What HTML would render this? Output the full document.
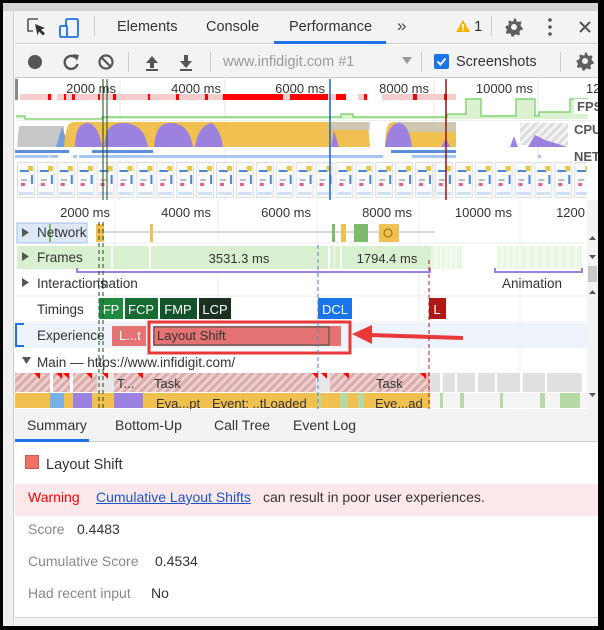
<!DOCTYPE html>
<html><head><meta charset="utf-8"><style>
*{margin:0;padding:0;box-sizing:border-box}
body{width:604px;height:630px;background:#000;position:relative;overflow:hidden;font-family:"Liberation Sans",sans-serif;font-size:14px;color:#333}
.a{position:absolute}
.t{position:absolute;white-space:nowrap}
</style></head><body>
<div class="a" style="left:3px;top:3px;width:595px;height:623px;background:#fff"></div>
<div class="a" style="left:3px;top:3px;width:595px;height:8px;background:#d4d4d4"></div>
<div class="a" style="left:3px;top:11px;width:11px;height:615px;background:#f0f0f0;border-right:1px solid #ccc"></div>
<!-- tab bar -->
<div class="a" style="left:15px;top:11px;width:583px;height:33px;background:#f3f3f3;border-bottom:1px solid #ccc"></div>
<svg class="a" style="left:24px;top:15px" width="70" height="26" viewBox="0 0 70 26">
<path d="M4 4h10M4 4v12h5" stroke="#555" stroke-width="1.6" fill="none"/>
<path d="M11 9l10 4-4 1.5 4 4-2 2-4-4-1.5 4z" fill="#333"/>
<rect x="42" y="4" width="12" height="18" rx="1.5" stroke="#1a73e8" stroke-width="1.8" fill="none"/>
<rect x="36" y="11" width="7" height="11" rx="1" stroke="#1a73e8" stroke-width="1.8" fill="#f3f3f3"/>
</svg>
<div class="a" style="left:94px;top:16px;width:1px;height:20px;background:#ccc"></div>
<div class="t" style="left:117px;top:19px;font-size:14.5px">Elements</div>
<div class="t" style="left:206px;top:19px;font-size:14.5px">Console</div>
<div class="t" style="left:289px;top:19px;font-size:14.5px">Performance</div>
<div class="a" style="left:274px;top:41px;width:112px;height:3px;background:#1a73e8"></div>
<div class="t" style="left:397px;top:16px;font-size:17px;color:#444">»</div>
<svg class="a" style="left:455px;top:19px" width="16" height="14"><path d="M8 1L15 13H1z" fill="#f4b400"/><rect x="7.2" y="5" width="1.6" height="4.5" fill="#fff"/><rect x="7.2" y="10.5" width="1.6" height="1.6" fill="#fff"/></svg>
<div class="t" style="left:474px;top:18px;font-size:15px">1</div>
<div class="a" style="left:491px;top:16px;width:1px;height:20px;background:#ccc"></div>
<svg class="a" style="left:504px;top:17px" width="20" height="20" viewBox="0 0 20 20"><path d="M10 1.5l2 .3.5 2.3 1.6.9 2.2-.8 1.3 1.6-1.1 2 .4 1.8 1.9 1.3-.3 2-2.3.5-.9 1.6.8 2.2-1.6 1.3-2-1.1-1.8.4-1.3 1.9-2-.3-.5-2.3-1.6-.9-2.2.8-1.3-1.6 1.1-2-.4-1.8L1.5 11l.3-2 2.3-.5.9-1.6-.8-2.2 1.6-1.3 2 1.1 1.8-.4z" fill="#5f5f5f"/><circle cx="10" cy="10" r="3" fill="#f3f3f3"/></svg>
<svg class="a" style="left:547px;top:17px" width="6" height="20"><circle cx="3" cy="3" r="1.8" fill="#555"/><circle cx="3" cy="10" r="1.8" fill="#555"/><circle cx="3" cy="17" r="1.8" fill="#555"/></svg>
<svg class="a" style="left:578px;top:20px" width="14" height="14"><path d="M2 2l10 10M12 2L2 12" stroke="#555" stroke-width="2"/></svg>
<!-- toolbar -->
<div class="a" style="left:15px;top:45px;width:583px;height:33px;background:#f3f3f3;border-bottom:1px solid #ccc"></div>
<svg class="a" style="left:25px;top:51px" width="175" height="22" viewBox="0 0 175 22">
<circle cx="10" cy="11" r="7" fill="#555"/>
<path d="M51 7a6.5 6.5 0 1 0 1.5 6" stroke="#555" stroke-width="2.4" fill="none"/><path d="M48 3l6 1-2 6z" fill="#555"/>
<circle cx="81" cy="11" r="6.5" stroke="#555" stroke-width="2.2" fill="none"/><path d="M76.5 6.5l9 9" stroke="#555" stroke-width="2.2"/>
<path d="M127 5l-6 7h4v5h4v-5h4z" fill="#555"/><rect x="121" y="18" width="12" height="2" fill="#555"/>
<path d="M161 17l-6-7h4V4h4v6h4z" fill="#555"/><rect x="155" y="18" width="12" height="2" fill="#555"/>
</svg>
<div class="a" style="left:128px;top:52px;width:1px;height:20px;background:#ccc"></div>
<div class="a" style="left:210px;top:52px;width:1px;height:20px;background:#ccc"></div>
<div class="t" style="left:223px;top:54px;color:#9a9a9a;font-size:14.5px">www.infidigit.com #1</div>
<svg class="a" style="left:402px;top:57px" width="10" height="8"><path d="M0 0h10L5 7z" fill="#999"/></svg>
<div class="a" style="left:421px;top:52px;width:1px;height:20px;background:#ccc"></div>
<div class="a" style="left:434px;top:54px;width:15px;height:15px;background:#1a73e8;border-radius:2px"></div>
<svg class="a" style="left:434px;top:54px" width="15" height="15"><path d="M3.5 7.5l3 3 5-6" stroke="#fff" stroke-width="2" fill="none"/></svg>
<div class="t" style="left:456px;top:54px;font-size:14.5px">Screenshots</div>
<div class="a" style="left:560px;top:52px;width:1px;height:20px;background:#ccc"></div>
<svg class="a" style="left:575px;top:51px" width="20" height="20" viewBox="0 0 20 20"><path d="M10 1.5l2 .3.5 2.3 1.6.9 2.2-.8 1.3 1.6-1.1 2 .4 1.8 1.9 1.3-.3 2-2.3.5-.9 1.6.8 2.2-1.6 1.3-2-1.1-1.8.4-1.3 1.9-2-.3-.5-2.3-1.6-.9-2.2.8-1.3-1.6 1.1-2-.4-1.8L1.5 11l.3-2 2.3-.5.9-1.6-.8-2.2 1.6-1.3 2 1.1 1.8-.4z" fill="#5f5f5f"/><circle cx="10" cy="10" r="3" fill="#f3f3f3"/></svg>
<!-- timeline svg -->
<svg class="a" style="left:0;top:79px" width="598" height="330" viewBox="0 79 598 330" font-family="Liberation Sans, sans-serif">
<defs>
<pattern id="th" x="17" y="162" width="19.9" height="36" patternUnits="userSpaceOnUse">
<rect x="0.5" y="0.5" width="17" height="35" fill="#fafafa" stroke="#d8d8d8" stroke-width="0.8"/>
<rect x="3" y="8" width="9" height="2" fill="#4a86d8"/><rect x="11" y="4" width="5" height="5" fill="#e8c840"/>
<rect x="14" y="13" width="2" height="9" fill="#4a86d8"/><rect x="4" y="17" width="6" height="2" fill="#bbb"/>
<rect x="4" y="21" width="4" height="3" fill="#e85a9a"/>
<rect x="2" y="30" width="14" height="3" fill="#cfe2f5"/>
</pattern>
<pattern id="hx" width="6" height="6" patternUnits="userSpaceOnUse" patternTransform="rotate(45)"><rect width="6" height="6" fill="#dcdcdc"/><rect width="3" height="6" fill="#f4f4f4"/></pattern>
<pattern id="hr" width="6" height="6" patternUnits="userSpaceOnUse" patternTransform="rotate(45)"><rect width="6" height="6" fill="#dcaaaa"/><rect width="3" height="6" fill="#ecd0d0"/></pattern>
</defs>
<rect x="15" y="79" width="583" height="121" fill="#fff"/>
<rect x="15" y="79" width="3" height="21" fill="#888"/>
<g stroke="#e4e4e4"><line x1="120" y1="79" x2="120" y2="200"/><line x1="225" y1="79" x2="225" y2="200"/><line x1="434" y1="79" x2="434" y2="200"/><line x1="538" y1="79" x2="538" y2="200"/></g>
<g font-size="13" fill="#333" text-anchor="end"><text x="116" y="93">2000 ms</text><text x="221" y="93">4000 ms</text><text x="325" y="93">6000 ms</text><text x="429" y="93">8000 ms</text><text x="533" y="93">10000 ms</text></g>
<text x="586" y="93" font-size="13" fill="#333">12</text>
<rect x="20" y="94" width="436" height="6" fill="#f7cccc"/>
<g fill="#fff"><rect x="53" y="94" width="4" height="6"/><rect x="346" y="94" width="12" height="6"/><rect x="368" y="94" width="14" height="6"/></g>
<g fill="#f00"><rect x="48" y="94" width="3" height="6"/><rect x="64" y="94" width="2" height="6"/><rect x="72" y="94" width="3" height="6"/><rect x="98" y="94" width="2" height="6"/><rect x="113" y="94" width="3" height="6"/><rect x="148" y="94" width="2" height="6"/><rect x="176" y="94" width="3" height="6"/><rect x="205" y="94" width="3" height="6"/><rect x="223" y="94" width="60" height="6"/><rect x="290" y="94" width="38" height="6"/><rect x="336" y="94" width="10" height="6"/><rect x="364" y="94" width="3" height="6"/><rect x="413" y="94" width="4" height="6"/><rect x="444" y="94" width="3" height="6"/></g>
<path d="M16 118V116h9v3h77v-2h239v-3h12v3h94v-3h19v-15h15v17h35v-17h19v17h4v-4h31v-13h18v20H16z" fill="#dbf1d2"/>
<path d="M16 116h9v3h77v-2h239v-3h12v3h94v-3h19v-15h15v17h35v-17h19v17h4v-4h31v-13h18" fill="none" stroke="#6ccf5a" stroke-width="1.2"/>
<rect x="574" y="99" width="24" height="15" fill="#fff"/><text x="577" y="111" font-size="13" font-weight="bold" fill="#555">FPS</text>
<rect x="15" y="120" width="583" height="1" fill="#eee"/>
<path d="M17 147L19 126H64V147z" fill="#c8c8c8"/>
<path d="M56 147l6-20 7 20z" fill="#6fa0e0"/>
<path d="M64 147 C66 125 68 122 75 122 H368 L370 147z M385 147 C386 124 388 122 395 122 H456 L456 147z" fill="#f0c050"/>
<path d="M330 122h40v8h-40z M395 122h61v10h-61z" fill="#c8c8c8" opacity=".8"/>
<path d="M75 147 C76 130 78 124 88 123 C96 124 100 135 102 147z M104 147 C106 128 110 123 125 123 C140 124 146 135 148 147z M154 147 C156 128 160 123 172 123 C186 124 191 135 193 147z M195 147 C197 132 204 124 212 123 C220 130 222 140 223 147z M331 147 L334 130 339 147z M385 147 C387 130 392 123 400 123 C408 125 411 138 412 147z M120 147 L122 140 125 147z" fill="#9c82e0"/>
<path d="M441 147 L446 138 450 147z" fill="#9c82e0"/>
<path d="M520 123h48v22h-48z" fill="url(#hx)"/>
<path d="M510 147 L514 136 518 147z M528 147 L535 135 545 140 568 147z" fill="#9c82e0"/>
<rect x="572" y="122" width="26" height="15" fill="#fff"/><text x="574" y="134" font-size="13" font-weight="bold" fill="#555">CPU</text>
<g fill="#5b8fd9"><rect x="15" y="150" width="54" height="3"/><rect x="92" y="150" width="61" height="3"/><rect x="391" y="150" width="65" height="3"/></g>
<g fill="#a7c6f0"><rect x="15" y="155" width="34" height="3"/><rect x="50" y="155" width="8" height="3"/><rect x="73" y="155" width="4" height="3"/><rect x="79" y="155" width="304" height="3"/><rect x="412" y="155" width="44" height="3"/><rect x="538" y="155" width="3" height="3"/></g>
<text x="574" y="161" font-size="13" font-weight="bold" fill="#555">NET</text>
<rect x="17" y="162" width="570" height="36" fill="url(#th)"/>
<line x1="103" y1="79" x2="103" y2="200" stroke="#1a4a1a" stroke-width="1"/><line x1="107" y1="79" x2="107" y2="200" stroke="#1a4a1a" stroke-width="1"/>
<line x1="330" y1="79" x2="330" y2="200" stroke="#1a5fd0" stroke-width="1.5"/>
<line x1="446" y1="79" x2="446" y2="200" stroke="#a01010" stroke-width="1.5"/>
<!-- flame area -->
<rect x="15" y="200" width="572" height="209" fill="#fff"/>
<rect x="587" y="200" width="11" height="209" fill="#f3f3f3"/>
<rect x="588" y="266" width="9" height="16" fill="#c8c8c8"/>
<path d="M589 240l3.5-4 3.5 4z M589 255l3.5 4 3.5-4z M589 294l3.5-4 3.5 4z M589 393l3.5 4 3.5-4z" fill="#555"/>
<g stroke="#ececec"><line x1="115" y1="200" x2="115" y2="409"/><line x1="218" y1="200" x2="218" y2="409"/><line x1="317" y1="200" x2="317" y2="409"/><line x1="419" y1="200" x2="419" y2="409"/><line x1="520" y1="200" x2="520" y2="409"/></g>
<g font-size="13" fill="#333" text-anchor="end"><text x="110" y="217">2000 ms</text><text x="211" y="217">4000 ms</text><text x="311" y="217">6000 ms</text><text x="412" y="217">8000 ms</text><text x="512" y="217">10000 ms</text><text x="585" y="217">1200</text></g>
<line x1="15" y1="243" x2="587" y2="243" stroke="#eee"/>
<line x1="104" y1="232" x2="435" y2="232" stroke="#ccc" stroke-width="1.5"/>
<rect x="17" y="223" width="70" height="20" fill="#dde8f6" stroke="#a7c0e8"/>
<g fill="#f0c050"><rect x="96" y="224" width="8" height="18"/><rect x="150" y="224" width="3" height="18"/><rect x="341" y="224" width="5" height="18"/><rect x="379" y="224" width="20" height="18"/></g>
<g fill="#7cba6a"><rect x="332" y="224" width="3" height="18"/><rect x="354" y="224" width="14" height="18"/><rect x="49" y="224" width="2" height="18"/></g>
<circle cx="388" cy="233" r="4" fill="none" stroke="#8a6a10"/>
<path d="M22 228v9l7-4.5z" fill="#555"/><text x="37" y="237" font-size="13.5" fill="#333">Network</text>
<rect x="17" y="246" width="414" height="23" fill="#d9f0d0"/>
<g fill="#fff"><rect x="111" y="246" width="2" height="23"/><rect x="149" y="246" width="2" height="23"/><rect x="328" y="246" width="2" height="23"/><rect x="334" y="246" width="1" height="23"/><rect x="340" y="246" width="2" height="23"/></g>
<rect x="431" y="246" width="31" height="23" fill="#eaf7e4"/><rect x="497" y="246" width="85" height="23" fill="#eaf7e4"/>
<g stroke="#fff"><path d="M436 246v23M441 246v23M446 246v23M451 246v23M456 246v23M502 246v23M508 246v23M514 246v23M520 246v23M528 246v23M536 246v23M544 246v23M552 246v23M560 246v23M568 246v23M576 246v23"/></g>
<text x="239" y="263" font-size="13" fill="#333" text-anchor="middle">3531.3 ms</text>
<text x="387" y="263" font-size="13" fill="#333" text-anchor="middle">1794.4 ms</text>
<path d="M22 252v9l7-4.5z" fill="#555"/><text x="37" y="262" font-size="13.5" fill="#333">Frames</text>
<path d="M77 268v4h353v-4 M495 268v4h87v-4" fill="none" stroke="#9c82e0" stroke-width="2"/>
<line x1="15" y1="296" x2="587" y2="296" stroke="#eee"/>
<path d="M22 278v9l7-4.5z" fill="#555"/><text x="37" y="288" font-size="13.5" fill="#333">Interactions</text><text x="101" y="288" font-size="13.5" fill="#333">nation</text>
<text x="502" y="288" font-size="13.5" fill="#333">Animation</text>
<line x1="15" y1="322" x2="587" y2="322" stroke="#eee"/>
<text x="37" y="314" font-size="13.5" fill="#333">Timings</text>
<rect x="99" y="298" width="24" height="21" fill="#1e8a3e"/><rect x="125" y="298" width="33" height="21" fill="#176b30"/><rect x="160" y="298" width="37" height="21" fill="#12532a"/><rect x="199" y="298" width="32" height="21" fill="#1a3020"/>
<rect x="318" y="298" width="34" height="21" fill="#1a73e8"/><rect x="429" y="298" width="17" height="21" fill="#b01717"/>
<g font-size="13" fill="#fff" text-anchor="middle"><text x="111" y="314">FP</text><text x="141" y="314">FCP</text><text x="178" y="314">FMP</text><text x="215" y="314">LCP</text><text x="335" y="314">DCL</text><text x="437" y="314">L</text></g>
<rect x="15" y="323" width="572" height="25" fill="#eef3fb"/>
<path d="M24 324h-8v22h8" fill="none" stroke="#1a73e8" stroke-width="2"/>
<text x="37" y="340" font-size="13.5" fill="#333">Experience</text>
<rect x="112" y="326" width="34" height="20" fill="#e57373"/><text x="119" y="340" font-size="13" fill="#fff">L...t</text>
<rect x="153" y="326" width="188" height="20" fill="#e57373"/><rect x="154" y="327" width="175" height="18" fill="none" stroke="#555" stroke-width="1.2"/>
<text x="157" y="340" font-size="13" fill="#333">Layout Shift</text>
<rect x="149" y="322" width="201" height="31" fill="none" stroke="#e83838" stroke-width="3"/>
<path d="M463 338 L370 335" stroke="#e83838" stroke-width="4"/><path d="M352 334 L372 325 372 344z" fill="#e83838"/>
<path d="M22 357l4.5 7 4.5-7z" fill="#555"/><text x="37" y="367" font-size="13.5" fill="#333">Main — https://www.infidigit.com/</text>
<rect x="15" y="373" width="415" height="19" fill="url(#hr)"/>
<rect x="430" y="373" width="152" height="19" fill="#e0e0e0"/>
<g fill="#e8e8e8"><rect x="97" y="373" width="17" height="19"/><rect x="316" y="373" width="14" height="19"/></g>
<g fill="#fff"><rect x="50" y="373" width="3" height="19"/><rect x="70" y="373" width="3" height="19"/><rect x="440" y="373" width="3" height="19"/><rect x="455" y="373" width="2" height="19"/><rect x="475" y="373" width="3" height="19"/><rect x="495" y="373" width="2" height="19"/><rect x="520" y="373" width="3" height="19"/><rect x="545" y="373" width="2" height="19"/></g>
<text x="117" y="388" font-size="13" fill="#333">T...</text><text x="154" y="388" font-size="13" fill="#333">Task</text><text x="376" y="388" font-size="13" fill="#333">Task</text>
<g fill="#f00"><path d="M34 373h6v6z"/><path d="M56 373h6v6z"/><path d="M63 373h6v6z"/><path d="M86 373h6v6z"/><path d="M102 373h6v6z"/><path d="M137 373h6v6z"/><path d="M312 373h6v6z"/><path d="M321 373h6v6z"/><path d="M343 373h6v6z"/><path d="M420 373h6v6z"/></g>
<rect x="15" y="393" width="572" height="15" fill="#f0c050"/>
<g fill="#9c82e0"><rect x="73" y="393" width="19" height="15"/><rect x="114" y="393" width="29" height="15"/></g>
<g fill="#7ab0e8"><rect x="50" y="393" width="14" height="15"/></g>
<g fill="#b7d9a5"><rect x="318" y="393" width="3" height="15"/><rect x="340" y="393" width="8" height="15"/><rect x="358" y="393" width="6" height="15"/></g>
<rect x="430" y="393" width="157" height="15" fill="#f4f4f4"/>
<g fill="#b7d9a5"><rect x="440" y="393" width="3" height="15"/><rect x="460" y="393" width="4" height="15"/><rect x="500" y="393" width="3" height="15"/><rect x="540" y="393" width="5" height="15"/><rect x="560" y="393" width="20" height="15"/></g>
<text x="156" y="408" font-size="13" fill="#333">Eva...pt</text><text x="212" y="408" font-size="13" fill="#333">Event: ..tLoaded</text><text x="375" y="408" font-size="13" fill="#333">Eve...ad</text>
<g stroke-dasharray="4,3"><line x1="99" y1="222" x2="99" y2="409" stroke="#1a4a1a"/><line x1="103" y1="222" x2="103" y2="409" stroke="#1a4a1a"/><line x1="318" y1="245" x2="318" y2="409" stroke="#4a88d8"/><line x1="429" y1="260" x2="429" y2="409" stroke="#b01717"/></g>
</svg>
<!-- bottom tabs -->
<div class="a" style="left:15px;top:409px;width:583px;height:33px;background:#f3f3f3;border-bottom:1px solid #ccc"></div>
<div class="t" style="left:27px;top:417px">Summary</div>
<div class="t" style="left:115px;top:417px">Bottom-Up</div>
<div class="t" style="left:214px;top:417px">Call Tree</div>
<div class="t" style="left:293px;top:417px">Event Log</div>
<div class="a" style="left:15px;top:439px;width:74px;height:3px;background:#1a73e8"></div>
<div class="a" style="left:25px;top:455px;width:14px;height:14px;background:#f07167;border:1px solid #c85a50"></div>
<div class="t" style="left:46px;top:457px;font-size:14.5px">Layout Shift</div>
<div class="a" style="left:15px;top:484px;width:583px;height:32px;background:#fce8ea"></div>
<div class="t" style="left:28px;top:489px;color:#f00">Warning</div>
<div class="t" style="left:96px;top:489px;color:#1a55c8;text-decoration:underline">Cumulative Layout Shifts</div>
<div class="t" style="left:263px;top:489px">can result in poor user experiences.</div>
<div class="t" style="left:28px;top:521px;color:#888">Score</div><div class="t" style="left:77px;top:521px">0.4483</div>
<div class="t" style="left:28px;top:553px;color:#888">Cumulative Score</div><div class="t" style="left:155px;top:553px">0.4534</div>
<div class="t" style="left:28px;top:585px;color:#888">Had recent input</div><div class="t" style="left:151px;top:585px">No</div>
<div class="a" style="left:15px;top:617px;width:583px;height:9px;background:#f3f3f3;border-top:1px solid #ccc"></div>
</body></html>
